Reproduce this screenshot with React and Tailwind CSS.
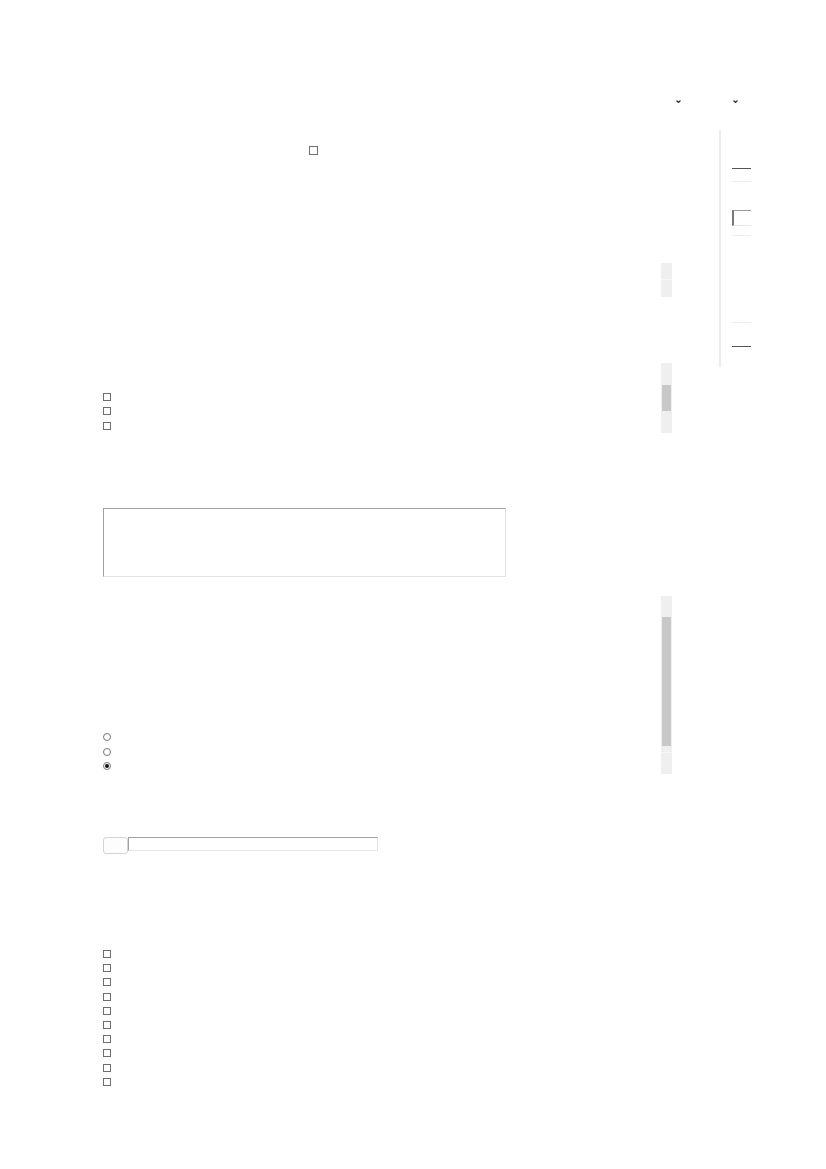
import React from 'react';

function Chevron() {
  return (
    <svg width="5" height="3" viewBox="0 0 5 3" className="block">
      <path d="M0.5 0.5 L2.5 2.5 L4.5 0.5" fill="none" stroke="#333" strokeWidth="1.2" />
    </svg>
  );
}

function Box({ size = 'w-[8px] h-[8px]' }) {
  return <div className={`${size} border-[1.5px] border-[#6e6e6e] bg-white`} />;
}

function Radio({ checked }) {
  return (
    <div className={`w-[8px] h-[8px] rounded-full border border-[#777] bg-white flex items-center justify-center ${checked ? 'border-[#555]' : ''}`}>
      {checked && <div className="w-[4px] h-[4px] rounded-full bg-[#111]" />}
    </div>
  );
}

export default function App() {
  const list = Array.from({ length: 10 });
  return (
    <div className="w-[826px] min-h-[1169px] bg-white font-['Liberation_Sans',sans-serif] overflow-hidden">
      {/* Header with two select arrows */}
      <div className="h-[130px] flex items-start pt-[100px] pl-[676px] gap-[52px]">
        <Chevron />
        <Chevron />
      </div>

      {/* Upper area: main + sidebar */}
      <div className="flex items-start">
        <div className="w-[719px] flex flex-col">
          <div className="mt-[16px] ml-[309px]">
            <Box size="w-[9px] h-[9px]" />
          </div>
          <div className="mt-[108px] ml-[661px] w-[11px] h-[34px] flex flex-col bg-[#efefef]">
            <div className="h-[17px] border-b border-[#f6f6f6]" />
            <div className="h-[17px]" />
          </div>
          <div className="mt-[66px] h-[70px] flex items-start">
            <div className="w-[661px] pl-[103px] pt-[30px] flex flex-col">
              {[0, 1, 2].map((i) => (
                <div key={i} className="h-[14.3px]">
                  <Box />
                </div>
              ))}
            </div>
            <div className="w-[11px] h-[70px] bg-[#efefef] flex flex-col">
              <div className="h-[22px]" />
              <div className="mx-[1px] h-[26px] bg-[#c8c8c8]" />
            </div>
          </div>
        </div>

        <aside className="w-[107px] h-[237px] border-l-2 border-[#ececec] pl-[11px] flex flex-col">
          <div className="w-[19px] mt-[38px] h-px bg-[#555]" />
          <div className="w-[19px] mt-[12px] h-px bg-[#ededed]" />
          <div className="w-[19px] mt-[28px] h-[16px] border-t border-t-[#9a9a9a] border-l-2 border-l-[#777] border-b border-b-[#e6e6e6]" />
          <div className="w-[19px] mt-[9px] h-px bg-[#ededed]" />
          <div className="w-[19px] mt-[86px] h-px bg-[#ededed]" />
          <div className="w-[19px] mt-[23px] h-px bg-[#555]" />
        </aside>
      </div>

      {/* Textarea */}
      <div className="mt-[75px] ml-[103px] w-[403px] h-[69px] border-t-[1.5px] border-l-[1.5px] border-t-[#a0a0a0] border-l-[#a0a0a0] border-b border-r border-b-[#e3e3e3] border-r-[#e3e3e3] bg-white" />

      {/* Radios + listbox */}
      <div className="mt-[19px] h-[178px] flex items-start">
        <div className="w-[661px] pl-[103px] pt-[137px] flex flex-col">
          {[false, false, true].map((c, i) => (
            <div key={i} className="h-[14.5px]">
              <Radio checked={c} />
            </div>
          ))}
        </div>
        <div className="w-[11px] h-[178px] bg-[#efefef] flex flex-col">
          <div className="h-[21px]" />
          <div className="mx-[1px] h-[129px] bg-[#c8c8c8]" />
          <div className="h-[7px] border-b border-[#f6f6f6]" />
        </div>
      </div>

      {/* File input */}
      <div className="mt-[63px] ml-[103px] flex items-start">
        <div className="w-[25px] h-[17px] rounded-[3px] border border-[#d4d4d4] bg-[#fdfdfd]" />
        <div className="w-[250px] h-[14px] border-t-[1.5px] border-l-[1.5px] border-t-[#a0a0a0] border-l-[#a0a0a0] border-b border-r border-b-[#e6e6e6] border-r-[#e6e6e6] bg-white" />
      </div>

      {/* Checkbox list */}
      <div className="mt-[96px] ml-[103px] flex flex-col">
        {list.map((_, i) => (
          <div key={i} className="h-[14.2px]">
            <Box />
          </div>
        ))}
      </div>
    </div>
  );
}
